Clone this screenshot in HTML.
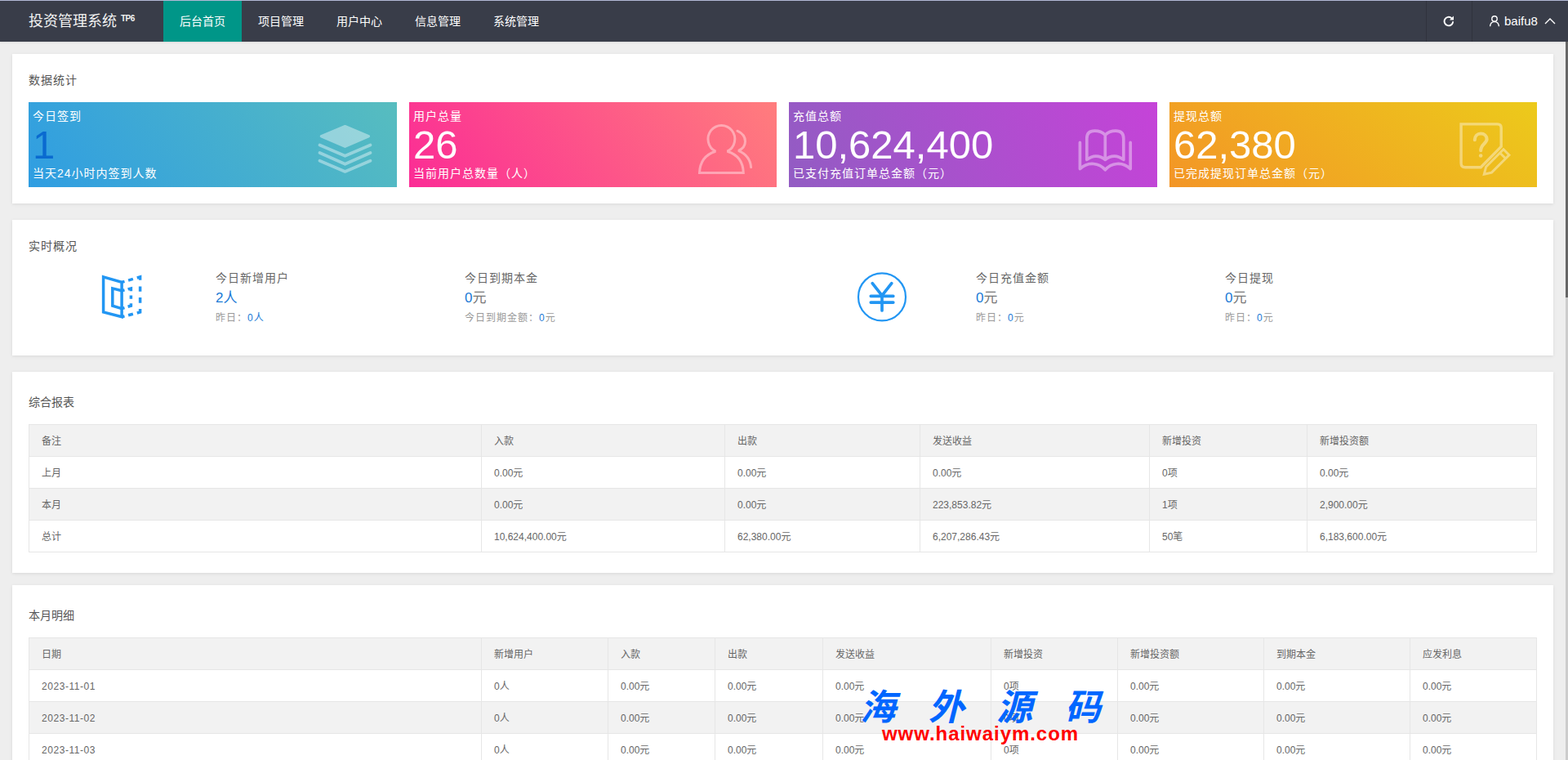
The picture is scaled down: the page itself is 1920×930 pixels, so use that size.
<!DOCTYPE html>
<html lang="zh-CN">
<head>
<meta charset="utf-8">
<title>投资管理系统</title>
<style>
*{box-sizing:border-box;margin:0;padding:0}
html,body{width:1920px;height:930px;overflow:hidden}
body{position:relative;background:#eee;font-family:"Liberation Sans","Noto Sans CJK SC",sans-serif;font-size:14px;color:#666;line-height:22px}
.abs{position:absolute}
#topline{left:0;top:0;width:1920px;height:1px;background:#b3b9d6}
#header{left:0;top:1px;width:1920px;height:50px;background:#393d49;box-shadow:0 1px 2px rgba(0,0,0,.1)}
#logo{left:35px;top:0;height:50px;line-height:50px;font-size:18px;color:#f2f2f2;white-space:nowrap}
#logo sup{position:absolute;left:113px;top:-3px;font-size:10px;font-weight:bold;letter-spacing:-.5px}
.nav{top:0;height:50px;width:96px;line-height:50px;text-align:center;color:#fff;font-size:14px;white-space:nowrap}
.nav.on{background:#009688}
.vsep{top:0;width:1px;height:50px;background:#30333d}
#uname{left:1842px;top:0;line-height:49px;font-size:15px;color:#fff}
#sbtrack{left:1917px;top:51px;width:3px;height:879px;background:#ccc}
#sbthumb{left:1917px;top:51px;width:3px;height:313px;background:#666}
.panel{left:15px;width:1887px;background:#fff;box-shadow:0 1px 4px rgba(0,0,0,.09)}
.ptitle{left:20px;font-size:14px;color:#555;white-space:nowrap;line-height:20px}
.card{top:59px;height:104px;color:#fff;letter-spacing:1px;white-space:nowrap;overflow:hidden}
.card .t{left:5px;top:6px;line-height:22px;font-size:14px}
.card .n{left:5px;top:26px;line-height:52px;font-size:49px;letter-spacing:0}
.card .s{left:5px;top:76px;line-height:22px;font-size:14px}
.card svg{position:absolute}
.ov{white-space:nowrap;letter-spacing:1px}
.ov .l{font-size:14px;line-height:20px;color:#666}
.ov .v{font-size:17px;line-height:24px;color:#777;margin-top:3px;letter-spacing:0}
.ov .d{font-size:12px;line-height:18px;color:#999;margin-top:3px}
.ov b{font-weight:normal;color:#1b7ad6}
table{position:absolute;left:20px;border-collapse:separate;border-spacing:0;table-layout:fixed;border-top:1px solid #e6e6e6;border-left:1px solid #e6e6e6;font-size:12px;color:#666}
td,th{height:39px;border-right:1px solid #e6e6e6;border-bottom:1px solid #e6e6e6;padding:2px 0 0 15px;text-align:left;font-weight:normal;white-space:nowrap;overflow:hidden;line-height:20px}
thead tr,tr.ev{background:#f2f2f2}
#wmurl{left:1080px;top:883px;font-size:24px;line-height:30px;font-weight:bold;color:#f00;white-space:nowrap;letter-spacing:.95px}
.dt{letter-spacing:.55px}
</style>
</head>
<body>
<div class="abs" id="topline"></div>
<div class="abs" id="header">
  <div class="abs" id="logo">投资管理系统<sup>TP6</sup></div>
  <div class="abs nav on" style="left:200px">后台首页</div>
  <div class="abs nav" style="left:296px">项目管理</div>
  <div class="abs nav" style="left:392px">用户中心</div>
  <div class="abs nav" style="left:488px">信息管理</div>
  <div class="abs nav" style="left:584px">系统管理</div>
  <div class="abs vsep" style="left:1746px"></div>
  <div class="abs vsep" style="left:1802px"></div>
  <svg class="abs" style="left:1766px;top:17px" width="16" height="16" viewBox="0 0 16 16"><path d="M13.2 8.3a5.3 5.3 0 1 1-1.7-4.1" fill="none" stroke="#fff" stroke-width="1.9"/><path d="M14 1.6v5h-5z" fill="#fff"/></svg>
  <svg class="abs" style="left:1823px;top:17px" width="14" height="15" viewBox="0 0 14 15"><circle cx="7" cy="5" r="3.2" fill="none" stroke="#fff" stroke-width="1.4"/><path d="M1.6 14.2c.3-3.6 2.4-5.6 5.4-5.6s5.100 2 5.400 5.600" fill="none" stroke="#fff" stroke-width="1.400"/></svg>
  <div class="abs" id="uname">baifu8</div>
  <svg class="abs" style="left:1891px;top:20px" width="14" height="9" viewBox="0 0 14 9"><path d="M1 8l6-6 6 6" fill="none" stroke="#fff" stroke-width="1.400"/></svg>
</div>
<div class="abs" id="sbtrack"></div>
<div class="abs" id="sbthumb"></div>

<!-- panel 1 -->
<div class="abs panel" style="top:66px;height:183px">
  <div class="abs ptitle" style="top:22px;letter-spacing:1px">数据统计</div>
  <div class="abs card" style="left:20px;width:451px;background:linear-gradient(-125deg,#57bdbf,#2f9de2)">
    <div class="abs t">今日签到</div><div class="abs n" style="color:#0a6ad0">1</div><div class="abs s">当天24小时内签到人数</div><svg style="left:354px;top:27px" width="67" height="61" viewBox="0 0 67 61"><g opacity=".4" fill="none" stroke="#fff" stroke-linecap="round" stroke-linejoin="round"><path d="M4.300 14.700L33.500 2.600l29 12.100-29 12.600z" fill="#fff" stroke-width="3.200"/><path d="M2.500 25.500l31 13.300 31-13.300M2.500 35l31 13.800 31-13.800M2.500 44.700l31 13.300 31-13.300" stroke-width="3.700"/></g></svg>
  </div>
  <div class="abs card" style="left:486px;width:450px;background:linear-gradient(-125deg,#ff7d7d,#fb2c95)">
    <div class="abs t">用户总量</div><div class="abs n">26</div><div class="abs s">当前用户总数量（人）</div><svg style="left:352px;top:25px" width="70" height="66" viewBox="0 0 70 66"><g opacity=".4" fill="none" stroke="#fff" stroke-width="3" stroke-linecap="round" stroke-linejoin="miter" stroke-miterlimit="2.500"><path d="M23.200 35.200A16.400 16.750 0 1 1 37.600 35.200C50 39 57 48 57.300 61.500H3.500C4 48 11 39 23.200 35.200z"/><path d="M49.900 10.200C56 13 59.500 17.500 59.500 23c0 5-3.200 9.300-8.400 11.300C60 38 65.800 44.500 66.600 54.700"/></g></svg>
  </div>
  <div class="abs card" style="left:951px;width:451px;background:linear-gradient(-113deg,#c543d8,#925cc3)">
    <div class="abs t">充值总额</div><div class="abs n">10,624,400</div><div class="abs s">已支付充值订单总金额（元）</div><svg style="left:352px;top:31px" width="71" height="56" viewBox="0 0 71 56"><g opacity=".4" fill="none" stroke="#fff" stroke-width="3.700" stroke-linecap="round" stroke-linejoin="round"><path d="M4.400 18.400V50.600C10 45.500 16 44 21 44.500C27 45 32 48 35.300 51.800C38.600 48 43.600 45 49.600 44.500C54.600 44 60.600 45.500 66.200 50.600V18.400"/><path d="M12.800 39.400V13.500Q12.800 4.200 22.500 4.200Q30 4.200 35.300 9.100Q40.600 4.200 48.100 4.200Q57.800 4.200 57.800 13.500V39.400C54 36.500 50 35.100 46.700 35.100C42.500 35.100 38.500 36.500 35.300 39.400C32.100 36.500 28.100 35.100 23.900 35.100C20.600 35.100 16.600 36.500 12.800 39.400zM35.300 9.100V39.400"/></g></svg>
  </div>
  <div class="abs card" style="left:1417px;width:450px;background:linear-gradient(-141deg,#ecca1b,#f39526)">
    <div class="abs t">提现总额</div><div class="abs n">62,380</div><div class="abs s">已完成提现订单总金额（元）</div><svg style="left:353px;top:23px" width="68" height="70" viewBox="0 0 68 70"><g opacity=".4" fill="none" stroke="#fff" stroke-width="3.400" stroke-linejoin="miter"><path d="M4.100 3.900H48.500Q53.200 3.900 53.200 8.600V31.400L28.200 56.700H9Q4.100 56.700 4.100 51.800z"/><path d="M56 34.800L62.900 41.700L41.500 63.100L32.300 65.300L34.600 56.200zM51.800 39.200L58.700 46" stroke-width="3"/><path d="M20.800 23.300C20.800 18.500 24 15.500 28.200 15.500C32.500 15.500 35.600 18.300 35.600 22.300C35.600 27.500 28.200 28.500 28.200 36.300" stroke-linecap="round" stroke-width="4.100"/><circle cx="28.200" cy="42.500" r="2.300" fill="#fff" stroke="none"/></g></svg>
  </div>
</div>

<!-- panel 2 -->
<div class="abs panel" style="top:269px;height:166px">
  <div class="abs ptitle" style="top:22px;letter-spacing:1px">实时概况</div>
  <svg class="abs" style="left:100px;top:60px" width="70" height="66" viewBox="0 0 70 66"><g fill="none" stroke="#2296f3" stroke-width="3.500" stroke-linejoin="miter" stroke-linecap="butt"><path d="M11.6 9.9 L34.1 16.4 L34.1 58.8 L11.6 53.0 z"/><path d="M34.1 26.8 L22.8 23.9 L22.8 45.2 L34.1 48.6"/><path d="M42.1 14.1 L47.9 12.4 M52.8 11.0 L56.6 9.9 L56.6 13.7 M56.6 21.5 L56.6 27.8 M56.6 35.0 L56.6 41.8 M56.6 49.0 L56.6 53.0 L52.8 54.0 M47.9 55.2 L42.1 56.7"/><path d="M41.6 24.9 L45.4 23.9 L45.4 27.3 M45.4 32.4 L45.4 36.7 M45.4 42.3 L45.4 45.2 L41.6 46.3"/><path d="M34.1 16.4 L37.5 15.4 M34.1 26.8 L37.5 25.9 M34.1 48.6 L37.5 47.6 M34.1 58.8 L37.5 57.9"/></g></svg>
  <svg class="abs" style="left:1030px;top:60px" width="70" height="70" viewBox="0 0 70 70"><g fill="none" stroke="#2296f3" stroke-linecap="round" stroke-linejoin="round"><circle cx="35.0" cy="34.4" r="29" stroke-width="2.200"/><path d="M23.2 17.6 L35.0 32.6 L46.8 17.6 M35.0 32.6 L35.0 51.0 M21.3 33.3 L48.8 33.3 M21.3 41.1 L48.8 41.1" stroke-width="3.700"/></g></svg>
  <div class="abs ov" style="left:249px;top:61px"><div class="l">今日新增用户</div><div class="v"><b>2人</b></div><div class="d">昨日：<b>0人</b></div></div>
  <div class="abs ov" style="left:554px;top:61px"><div class="l">今日到期本金</div><div class="v"><b>0</b>元</div><div class="d">今日到期金额：<b>0</b>元</div></div>
  <div class="abs ov" style="left:1180px;top:61px"><div class="l">今日充值金额</div><div class="v"><b>0</b>元</div><div class="d">昨日：<b>0</b>元</div></div>
  <div class="abs ov" style="left:1485px;top:61px"><div class="l">今日提现</div><div class="v"><b>0</b>元</div><div class="d">昨日：<b>0</b>元</div></div>
</div>

<!-- panel 3 -->
<div class="abs panel" style="top:455px;height:246px">
  <div class="abs ptitle" style="top:27px">综合报表</div>
  <table style="top:64px;width:1847px">
    <colgroup><col style="width:554px"><col style="width:298px"><col style="width:239px"><col style="width:281px"><col style="width:193px"><col style="width:281px"></colgroup>
    <thead><tr><th>备注</th><th>入款</th><th>出款</th><th>发送收益</th><th>新增投资</th><th>新增投资额</th></tr></thead>
    <tbody>
      <tr><td>上月</td><td>0.00元</td><td>0.00元</td><td>0.00元</td><td>0项</td><td>0.00元</td></tr>
      <tr class="ev"><td>本月</td><td>0.00元</td><td>0.00元</td><td>223,853.82元</td><td>1项</td><td>2,900.00元</td></tr>
      <tr><td>总计</td><td>10,624,400.00元</td><td>62,380.00元</td><td>6,207,286.43元</td><td>50笔</td><td>6,183,600.00元</td></tr>
    </tbody>
  </table>
</div>

<!-- panel 4 -->
<div class="abs panel" style="top:716px;height:260px">
  <div class="abs ptitle" style="top:27px">本月明细</div>
  <table style="top:64px;width:1847px">
    <colgroup><col style="width:554px"><col style="width:155px"><col style="width:131px"><col style="width:132px"><col style="width:206px"><col style="width:155px"><col style="width:179px"><col style="width:179px"><col style="width:155px"></colgroup>
    <thead><tr><th>日期</th><th>新增用户</th><th>入款</th><th>出款</th><th>发送收益</th><th>新增投资</th><th>新增投资额</th><th>到期本金</th><th>应发利息</th></tr></thead>
    <tbody>
      <tr><td class="dt">2023-11-01</td><td>0人</td><td>0.00元</td><td>0.00元</td><td>0.00元</td><td>0项</td><td>0.00元</td><td>0.00元</td><td>0.00元</td></tr>
      <tr class="ev"><td class="dt">2023-11-02</td><td>0人</td><td>0.00元</td><td>0.00元</td><td>0.00元</td><td>0项</td><td>0.00元</td><td>0.00元</td><td>0.00元</td></tr>
      <tr><td class="dt">2023-11-03</td><td>0人</td><td>0.00元</td><td>0.00元</td><td>0.00元</td><td>0项</td><td>0.00元</td><td>0.00元</td><td>0.00元</td></tr>
    </tbody>
  </table>
</div>
<!-- wm -->
<svg class="abs" style="left:1050px;top:838px" width="310" height="56" viewBox="0 0 310 56"><text x="3" y="43" font-size="44" font-weight="bold" font-style="italic" fill="#0066ff" textLength="295" lengthAdjust="spacing" style="font-family:'Liberation Sans','Noto Sans CJK SC',sans-serif">海外源码</text></svg>
<div class="abs" id="wmurl">www.haiwaiym.com</div>
<!-- /wm -->
</body>
</html>
